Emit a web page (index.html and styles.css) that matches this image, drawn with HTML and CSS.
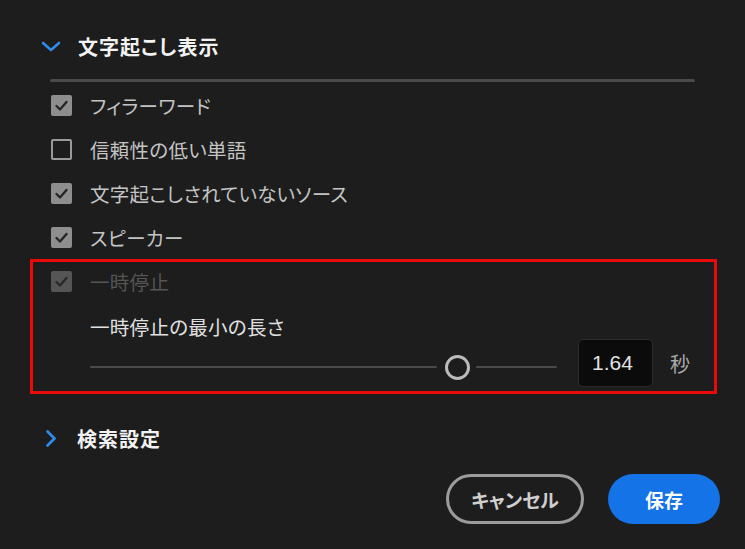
FILE: index.html
```html
<!DOCTYPE html>
<html lang="ja">
<head>
<meta charset="utf-8">
<link rel="stylesheet" href="styles.css">
</head>
<body>
<div class="panel">
  <div class="section-head">
    <span class="chev"><svg width="20" height="11" viewBox="0 0 20 11"><polyline points="2,2 10,9 18,2" fill="none" stroke="#2d8ceb" stroke-width="2.6" stroke-linecap="round" stroke-linejoin="round"/></svg></span>
    <span class="head-text">文字起こし表示</span>
  </div>
  <div class="divider"></div>
  <div class="options">
    <div class="opt"><span class="cb on"><svg width="21" height="21" viewBox="0 0 21 21"><polyline points="5.5,11 9,14.5 15.5,7" fill="none" stroke="#262626" stroke-width="2.4" stroke-linecap="round" stroke-linejoin="round"/></svg></span><span class="label">フィラーワード</span></div>
    <div class="opt"><span class="cb off"></span><span class="label">信頼性の低い単語</span></div>
    <div class="opt"><span class="cb on"><svg width="21" height="21" viewBox="0 0 21 21"><polyline points="5.5,11 9,14.5 15.5,7" fill="none" stroke="#262626" stroke-width="2.4" stroke-linecap="round" stroke-linejoin="round"/></svg></span><span class="label">文字起こしされていないソース</span></div>
    <div class="opt"><span class="cb on"><svg width="21" height="21" viewBox="0 0 21 21"><polyline points="5.5,11 9,14.5 15.5,7" fill="none" stroke="#262626" stroke-width="2.4" stroke-linecap="round" stroke-linejoin="round"/></svg></span><span class="label">スピーカー</span></div>
  </div>
  <div class="pause-box">
    <div class="opt pause-opt"><span class="cb dis"><svg width="21" height="21" viewBox="0 0 21 21"><polyline points="5.5,11 9,14.5 15.5,7" fill="none" stroke="#2a2a2a" stroke-width="2.4" stroke-linecap="round" stroke-linejoin="round"/></svg></span><span class="label dim">一時停止</span></div>
    <div class="min-label">一時停止の最小の長さ</div>
    <div class="slider-row">
      <div class="slider">
        <span class="track left"></span>
        <span class="thumb"></span>
        <span class="track right"></span>
      </div>
      <div class="num">1.64</div>
      <span class="unit">秒</span>
    </div>
  </div>
  <div class="section-head search">
    <span class="chev"><svg width="12" height="19" viewBox="0 0 12 19"><polyline points="2.5,2.5 9.5,9.5 2.5,16.5" fill="none" stroke="#2d8ceb" stroke-width="2.8" stroke-linecap="round" stroke-linejoin="round"/></svg></span>
    <span class="head-text">検索設定</span>
  </div>
  <div class="buttons">
    <button class="btn cancel">キャンセル</button>
    <button class="btn save">保存</button>
  </div>
</div>
</body>
</html>
```

FILE: styles.css
```css
html, body {
  margin: 0;
  padding: 0;
  background: #1d1d1d;
}
body {
  width: 745px;
  height: 549px;
  overflow: hidden;
  font-family: "Noto Sans CJK JP", "Noto Sans", sans-serif;
  font-feature-settings: "palt";
}
.panel {
  padding-top: 26px;
  display: flex;
  flex-direction: column;
}
.section-head {
  display: flex;
  align-items: center;
  height: 40px;
  padding-left: 41px;
  gap: 17px;
}
.chev {
  width: 20px;
  display: flex;
  justify-content: center;
  align-items: center;
}
.head-text {
  color: #f2f2f2;
  font-size: 20px;
  font-weight: 700;
  letter-spacing: 1px;
}
.divider {
  margin-top: 13px;
  margin-left: 50px;
  width: 645px;
  height: 3px;
  background: #4a4a4a;
  border-radius: 2px;
}
.options {
  margin-top: 1px;
  display: flex;
  flex-direction: column;
}
.opt {
  display: flex;
  align-items: center;
  height: 44px;
  padding-left: 51px;
  gap: 18px;
}
.cb {
  width: 21px;
  height: 21px;
  box-sizing: border-box;
  border-radius: 2px;
  display: flex;
}
.cb.on {
  background: #8e8e8e;
}
.cb.off {
  border: 2px solid #9a9a9a;
}
.cb.dis {
  background: #555555;
}
.label {
  color: #c4c4c4;
  font-size: 19.5px;
  letter-spacing: 0.3px;
}
.label.dim {
  color: #555555;
}
.pause-box {
  margin-left: 30px;
  width: 687px;
  height: 135px;
  box-sizing: border-box;
  border: 3px solid #ea0a0a;
  display: flex;
  flex-direction: column;
}
.pause-opt {
  height: 38px;
  padding-left: 18px;
}
.min-label {
  margin-top: 14px;
  height: 25px;
  line-height: 25px;
  padding-left: 57px;
  color: #e0e0e0;
  font-size: 19.5px;
  letter-spacing: 0.3px;
}
.slider-row {
  display: flex;
  align-items: center;
  height: 48px;
  padding-left: 57px;
}
.slider {
  width: 467px;
  height: 48px;
  box-sizing: border-box;
  padding-top: 8px;
  display: flex;
  align-items: center;
}
.track {
  height: 2px;
  background: #4a4a4a;
  border-radius: 1px;
}
.track.left {
  width: 347px;
}
.track.right {
  width: 81px;
}
.thumb {
  width: 25px;
  height: 25px;
  box-sizing: border-box;
  border: 3px solid #bcbcbc;
  border-radius: 50%;
  margin: 0 6px 0 8px;
}
.num {
  margin-left: 21px;
  width: 75px;
  height: 48px;
  box-sizing: border-box;
  background: #0b0b0b;
  border: 1px solid #2c2c2c;
  border-radius: 5px;
  padding-left: 13px;
  line-height: 46px;
  color: #e2e2e2;
  font-family: "Liberation Sans", Arial, sans-serif;
  font-size: 21px;
}
.unit {
  margin-left: 17px;
  color: #a8a8a8;
  font-size: 20px;
}
.section-head.search {
  margin-top: 24px;
  gap: 16px;
}
.buttons {
  margin-top: 16px;
  display: flex;
  justify-content: flex-end;
  padding-right: 25px;
  gap: 24px;
}
.btn {
  height: 50px;
  border-radius: 25px;
  font-family: "Noto Sans CJK JP", sans-serif;
  font-feature-settings: "palt";
  font-size: 19px;
  font-weight: 700;
  padding: 0;
  box-sizing: border-box;
}
.cancel {
  width: 138px;
  background: transparent;
  border: 3px solid #9c9c9c;
  color: #cfcfcf;
}
.save {
  width: 112px;
  background: #1473e6;
  border: none;
  color: #ffffff;
}
```
